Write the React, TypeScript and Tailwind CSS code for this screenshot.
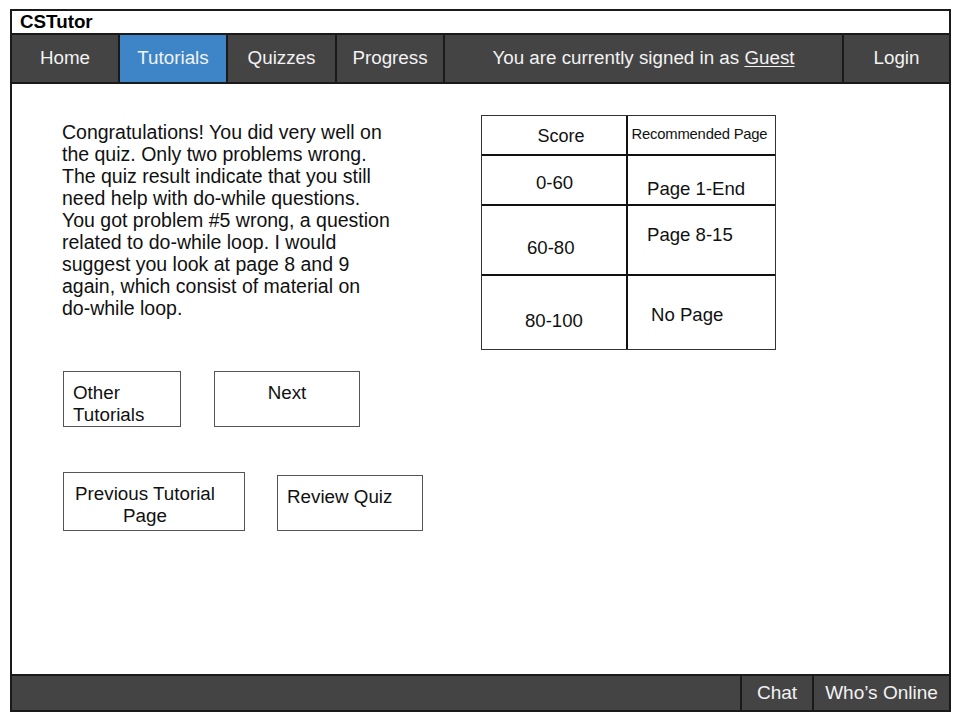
import React from "react";

const navItems = [
  { label: "Home", w: "w-[108px]", active: false },
  { label: "Tutorials", w: "w-[108px]", active: true },
  { label: "Quizzes", w: "w-[109px]", active: false },
  { label: "Progress", w: "w-[108px]", active: false },
];

const paragraph = [
  "Congratulations! You did very well on",
  "the quiz. Only two problems wrong.",
  "The quiz result indicate that you still",
  "need help with do-while questions.",
  "You got problem #5 wrong, a question",
  "related to do-while loop. I would",
  "suggest you look at page 8 and 9",
  "again, which consist of material on",
  "do-while loop.",
];

function ScoreTable() {
  return (
    <div className="w-[295px] self-start border border-[#333] text-[18.6px] leading-[22px] text-[#111]">
      <div className="flex h-[40px] border-b-2 border-[#111]">
        <div className="flex w-[146px] items-center justify-center border-r-2 border-[#111] pl-[14px] pt-[2px] text-[18px]">
          Score
        </div>
        <div className="flex flex-1 items-center justify-center pb-[2px] pr-[4px] text-[14.8px] tracking-[-0.2px]">
          Recommended Page
        </div>
      </div>
      <div className="flex h-[50px] border-b-2 border-[#111]">
        <div className="w-[146px] border-r-2 border-[#111] pl-[54px] pt-[16px]">0-60</div>
        <div className="flex-1 pl-[19px] pt-[22px]">Page 1-End</div>
      </div>
      <div className="flex h-[70px] border-b-2 border-[#111]">
        <div className="w-[146px] border-r-2 border-[#111] pl-[45px] pt-[31px]">60-80</div>
        <div className="flex-1 pl-[19px] pt-[18px]">Page 8-15</div>
      </div>
      <div className="flex h-[73px]">
        <div className="w-[146px] border-r-2 border-[#111] pl-[43px] pt-[34px]">80-100</div>
        <div className="flex-1 pl-[23px] pt-[28px]">No Page</div>
      </div>
    </div>
  );
}

export default function App() {
  return (
    <div className="h-[720px] w-[960px] bg-white pl-[10px] pt-[9px] font-['Liberation_Sans',Arial,sans-serif]">
      <div className="flex h-[703px] w-[941px] flex-col border-2 border-[#1a1a1a]">
        {/* title bar */}
        <div className="h-[24px] border-b-2 border-[#1a1a1a] pl-[8px] text-[18.8px] font-bold leading-[22px] text-black">
          CSTutor
        </div>

        {/* nav */}
        <div className="flex h-[49px] border-b-2 border-[#1a1a1a] bg-[#444444] text-[18.8px] text-[#f2f2f2]">
          {navItems.map((item) => (
            <div
              key={item.label}
              className={`${item.w} flex items-center justify-center border-r-2 border-[#1a1a1a] ${
                item.active ? "bg-[#3d85c6]" : ""
              }`}
            >
              {item.label}
            </div>
          ))}
          <div className="flex flex-1 items-center justify-center border-r-2 border-[#1a1a1a]">
            <span>
              You are currently signed in as <span className="underline underline-offset-2">Guest</span>
            </span>
          </div>
          <div className="flex w-[105px] items-center justify-center">Login</div>
        </div>

        {/* content */}
        <div className="flex flex-1 pl-[50px] pt-[31px] text-[#111]">
          <div className="w-[419px]">
            <div className="mt-[6px] text-[19.5px] leading-[22px]">
              {paragraph.map((line) => (
                <div key={line} className="whitespace-nowrap">
                  {line}
                </div>
              ))}
            </div>

            <div className="mt-[52px] flex gap-[33px] pl-[1px] text-[18.8px] leading-[22px]">
              <div className="h-[56px] w-[118px] border border-[#555] pl-[9px] pt-[10px]">
                Other
                <br />
                Tutorials
              </div>
              <div className="h-[56px] w-[146px] border border-[#555] pt-[10px] text-center">Next</div>
            </div>

            <div className="mt-[45px] flex items-start gap-[32px] pl-[1px] text-[18.8px] leading-[22px]">
              <div className="h-[59px] w-[182px] border border-[#555] pr-[18px] pt-[10px] text-center">
                Previous Tutorial
                <br />
                Page
              </div>
              <div className="mt-[3px] h-[56px] w-[146px] border border-[#555] pl-[9px] pt-[10px]">
                Review Quiz
              </div>
            </div>
          </div>
          <ScoreTable />
        </div>

        {/* footer */}
        <div className="flex h-[36px] border-t-2 border-[#1a1a1a] bg-[#444444] text-[19px] text-[#f2f2f2]">
          <div className="flex-1" />
          <div className="flex w-[72px] items-center justify-center border-l-2 border-[#1a1a1a]">Chat</div>
          <div className="flex w-[137px] items-center justify-center border-l-2 border-[#1a1a1a]">
            Who’s Online
          </div>
        </div>
      </div>
    </div>
  );
}
